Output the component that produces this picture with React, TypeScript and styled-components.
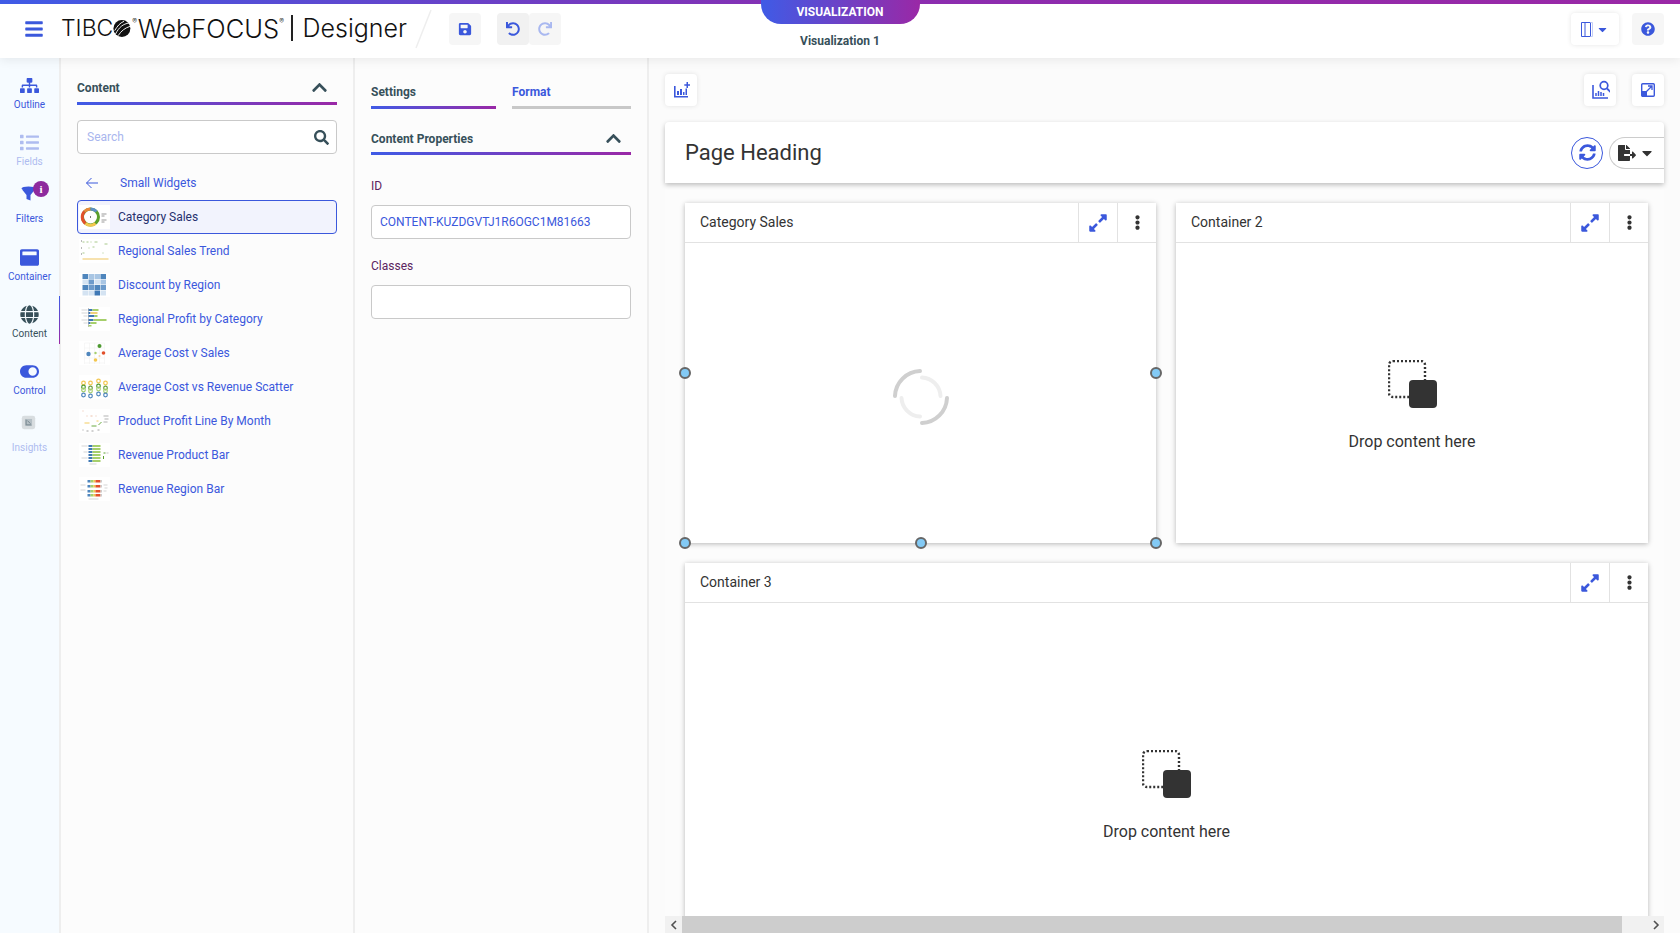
import React from 'react';
import styled, { createGlobalStyle } from 'styled-components';
import {
  FaBars,
  FaCaretDown,
  FaChevronUp,
  FaEllipsisV,
  FaExpandAlt,
  FaFileExport,
  FaGlobe,
  FaList,
  FaQuestionCircle,
  FaRedo,
  FaSave,
  FaSearch,
  FaSitemap,
  FaSyncAlt,
  FaToggleOn,
  FaUndo,
  FaWindowMaximize,
} from 'react-icons/fa';

const BLUE = '#3b58dc';
const SLATE = '#37505a';
const GRADIENT = 'linear-gradient(90deg, #3f5be6 0%, #9a28a6 100%)';

const GlobalStyle = createGlobalStyle`
  html, body {
    margin: 0;
    height: 100%;
    overflow: hidden;
    font-family: Roboto, "Liberation Sans", sans-serif;
    background: #fcfcfc;
  }
  * { box-sizing: border-box; }
`;

const Shell = styled.div`
  width: 1680px;
  height: 933px;
  display: flex;
  flex-direction: column;
  overflow: hidden;
`;

const TopBar = styled.header`
  position: relative;
  z-index: 3;
  height: 58px;
  flex: none;
  display: flex;
  align-items: center;
  padding: 0 16px 0 24px;
  background: #fff;
  box-shadow: 0 2px 10px rgba(0, 0, 0, 0.08);
  &::before {
    content: '';
    position: absolute;
    left: 0;
    right: 0;
    top: 0;
    height: 4px;
    background: linear-gradient(90deg, #3f5be6 0%, #8a2db0 50%, #9a28a6 100%);
  }
`;

const Burger = styled.span`
  display: flex;
  color: ${BLUE};
  font-size: 20px;
  width: 37px;
`;

const Logo = styled.div`
  display: flex;
  align-items: center;
  width: 346px;
  height: 30px;
  margin-top: -2px;
  font-family: Inter, sans-serif;
  font-weight: 300;
  color: #111;
  white-space: nowrap;
  svg {
    margin: 0 1px 0 0;
  }
  sup {
    font-size: 7px;
    line-height: 0;
    margin-top: -12px;
    margin-right: 1px;
  }
`;

const LogoWord = styled.span<{ $size: number }>`
  font-size: ${(p) => p.$size}px;
`;

const LogoBar = styled.span`
  width: 2px;
  height: 26px;
  margin: 0 10px 0 6px;
  background: #222;
`;

const Slash = styled.svg`
  flex: none;
  width: 18px;
  height: 40px;
  margin: 0 16px 0 8px;
`;

const ToolGroup = styled.div`
  display: flex;
  margin-right: 16px;
`;

const ToolButton = styled.button<{ $faded?: boolean; $shaded?: boolean }>`
  width: 32px;
  height: 32px;
  padding: 0;
  border: 0;
  border-radius: 4px;
  display: flex;
  align-items: center;
  justify-content: center;
  font-size: 14px;
  color: ${(p) => (p.$faded ? '#a9b8f0' : BLUE)};
  background: ${(p) => (p.$shaded ? '#f1f1f1' : '#f6f6f6')};
`;

const TabCentre = styled.div`
  position: absolute;
  left: 760px;
  top: 0;
  width: 160px;
  display: flex;
  flex-direction: column;
  align-items: center;
`;

const ModeTab = styled.div`
  width: 159px;
  height: 24px;
  border-radius: 0 0 20px 20px;
  background: ${GRADIENT};
  color: #fff;
  font-size: 12px;
  font-weight: 700;
  text-align: center;
  line-height: 25px;
`;

const DocTitle = styled.div`
  margin-top: 10px;
  font-size: 12px;
  font-weight: 700;
  color: ${SLATE};
`;

const TopRight = styled.div`
  margin-left: auto;
  display: flex;
  gap: 13px;
`;

const PanelToggle = styled.button`
  width: 48px;
  height: 32px;
  padding: 0;
  border: 0;
  border-radius: 4px;
  display: flex;
  align-items: center;
  justify-content: center;
  gap: 3px;
  color: ${BLUE};
  font-size: 13px;
  background: #fff;
  box-shadow: 0 0 5px rgba(0, 0, 0, 0.1);
`;

const Main = styled.div`
  flex: 1;
  min-height: 0;
  display: flex;
`;

const Rail = styled.nav`
  width: 61px;
  flex: none;
  padding-top: 18px;
  background: #f6fbff;
  border-right: 2px solid #eeeeee;
`;

const RailItem = styled.div<{ $tone: 'blue' | 'faded' | 'active' }>`
  position: relative;
  height: 57.3px;
  display: flex;
  flex-direction: column;
  align-items: center;
  font-size: 10px;
  color: ${(p) => (p.$tone === 'blue' ? BLUE : p.$tone === 'faded' ? '#aebcf0' : SLATE)};
  svg {
    height: 19px;
    width: 19px;
    margin-bottom: 4px;
    color: ${(p) => (p.$tone === 'blue' ? BLUE : p.$tone === 'faded' ? '#aebcf0' : SLATE)};
  }
  ${(p) =>
    p.$tone === 'active'
      ? `&::after {
    content: '';
    position: absolute;
    right: -1px;
    top: -9px;
    width: 1.5px;
    height: 48px;
    background: linear-gradient(180deg, #3f5be6, #9a28a6);
  }`
      : ''}
`;

const SmallIconSlot = styled.span`
  display: flex;
  height: 22px;
  align-items: flex-start;
  && svg {
    width: 15px;
    height: 15px;
    margin: -5px 0 0 -2px;
  }
`;

const Badge = styled.span`
  position: absolute;
  left: 33px;
  top: -10px;
  width: 16px;
  height: 16px;
  border-radius: 50%;
  background: #8e2a9e;
  color: #fff;
  font-size: 11px;
  font-weight: 700;
  line-height: 16px;
  text-align: center;
  font-family: 'Liberation Serif', serif;
`;

const Panel = styled.section<{ $width: number }>`
  width: ${(p) => p.$width}px;
  flex: none;
  padding: 0 16px;
  background: #fcfcfc;
  border-right: 2px solid #eeeeee;
`;

const SectionHead = styled.div`
  height: 22px;
  display: flex;
  align-items: flex-start;
  justify-content: space-between;
  padding: 1px 9px 0 0;
  font-size: 12px;
  font-weight: 700;
  color: ${SLATE};
  svg {
    font-size: 17px;
    margin-top: -2px;
  }
`;

const GradientRule = styled.div`
  height: 3px;
  background: ${GRADIENT};
`;

const ContentTop = styled.div`
  padding-top: 22px;
`;

const SearchBox = styled.div`
  height: 34px;
  margin-top: 15px;
  display: flex;
  align-items: center;
  justify-content: space-between;
  padding: 0 7px 0 9px;
  background: #fff;
  border: 1px solid #c9c9c9;
  border-radius: 4px;
  font-size: 12px;
  color: #a9b6ee;
  svg {
    font-size: 15px;
    color: ${SLATE};
  }
`;

const BackRow = styled.div`
  height: 46px;
  display: flex;
  align-items: center;
  padding: 11px 0 0 8px;
  font-size: 12px;
  color: ${BLUE};
  svg {
    width: 14px;
    height: 14px;
    margin-right: 21px;
  }
`;

const WidgetRow = styled.div<{ $selected?: boolean }>`
  height: 34px;
  display: flex;
  align-items: center;
  gap: 8px;
  padding-left: 1px;
  font-size: 12px;
  color: ${(p) => (p.$selected ? '#26306e' : BLUE)};
  background: ${(p) => (p.$selected ? '#f2f3fd' : 'transparent')};
  border: 1px solid ${(p) => (p.$selected ? BLUE : 'transparent')};
  border-radius: 4px;
  svg {
    flex: none;
    width: 31px;
    height: 24px;
    background: #fff;
  }
`;

const TabRow = styled.div`
  display: flex;
  gap: 16px;
  padding-top: 27px;
`;

const TabItem = styled.div<{ $active?: boolean }>`
  flex: ${(p) => (p.$active ? '0 0 125px' : '1')};
  height: 24px;
  font-size: 12px;
  font-weight: 700;
  color: ${(p) => (p.$active ? SLATE : BLUE)};
  border-bottom: 3px solid transparent;
  border-image: ${(p) => (p.$active ? GRADIENT : 'linear-gradient(#c8c8c8, #c8c8c8)')} 1;
`;

const PropsHead = styled(SectionHead)`
  margin-top: 22px;
  height: 21px;
  padding-top: 1px;
`;

const Field = styled.label`
  display: block;
  margin-top: 24px;
  font-size: 12px;
  line-height: 14px;
  color: #5b2460;
  & + & {
    margin-top: 20px;
  }
`;

const FieldBox = styled.div`
  height: 34px;
  margin-top: 12px;
  padding: 0 8px;
  display: flex;
  align-items: center;
  background: #fff;
  border: 1px solid #c9c9c9;
  border-radius: 4px;
  font-size: 12px;
  color: ${BLUE};
`;

const Canvas = styled.main`
  flex: 1;
  min-width: 0;
  display: flex;
  flex-direction: column;
  background: #fbfbfb;
`;

const CanvasTools = styled.div`
  height: 64px;
  flex: none;
  display: flex;
  align-items: center;
  padding: 0 16px;
  gap: 16px;
`;

const FloatButton = styled.button`
  width: 32px;
  height: 32px;
  padding: 0;
  border: 0;
  border-radius: 4px;
  display: flex;
  align-items: center;
  justify-content: center;
  background: #fff;
  box-shadow: 0 0 5px rgba(0, 0, 0, 0.1);
  &:nth-child(2) {
    margin-left: auto;
  }
`;

const Page = styled.div`
  flex: 1;
  min-height: 0;
  width: 999px;
  margin-left: 16px;
  display: flex;
  flex-direction: column;
`;

const PageHead = styled.div`
  position: relative;
  z-index: 1;
  height: 61px;
  flex: none;
  display: flex;
  align-items: center;
  padding-left: 20px;
  background: #fff;
  border-radius: 4px 4px 0 0;
  box-shadow: 0 2px 5px rgba(0, 0, 0, 0.25);
`;

const PageTitle = styled.h1`
  margin: 0;
  flex: 1;
  font-size: 22px;
  font-weight: 400;
  color: #333;
`;

const RefreshButton = styled.button`
  width: 32px;
  height: 32px;
  padding: 0;
  border: 1px solid ${BLUE};
  border-radius: 50%;
  display: flex;
  align-items: center;
  justify-content: center;
  font-size: 17px;
  color: ${BLUE};
  background: #fff;
`;

const ExportPill = styled.button`
  width: 55px;
  height: 32px;
  margin-left: 6px;
  padding: 0 0 0 8px;
  border: 1px solid #ccc;
  border-right: 0;
  border-radius: 16px 0 0 16px;
  display: flex;
  align-items: center;
  gap: 3px;
  font-size: 18px;
  color: #333;
  background: #fff;
  svg:last-child {
    font-size: 16px;
  }
`;

const CardArea = styled.div`
  flex: 1;
  min-height: 0;
  overflow: hidden;
  display: grid;
  grid-template-columns: 471px 472px;
  grid-template-rows: 340px 400px;
  column-gap: 20px;
  row-gap: 20px;
  padding: 20px 16px 0 20px;
  background: #fcfcfc;
`;

const Card = styled.article<{ $wide?: boolean }>`
  position: relative;
  display: flex;
  flex-direction: column;
  background: #fff;
  box-shadow: 0 1px 5px rgba(0, 0, 0, 0.28);
  ${(p) => (p.$wide ? 'grid-column: 1 / 3;' : '')}
`;

const CardHead = styled.div`
  height: 40px;
  flex: none;
  display: flex;
  align-items: center;
  padding-left: 15px;
  border-bottom: 1px solid #e2e2e2;
  font-size: 14px;
  color: #333;
`;

const CardTitle = styled.span`
  flex: 1;
  padding-bottom: 2px;
`;

const CardAction = styled.button<{ $dark?: boolean }>`
  width: 39px;
  height: 39px;
  padding: 0;
  border: 0;
  border-left: 1px solid #e2e2e2;
  display: flex;
  align-items: center;
  justify-content: center;
  background: #fff;
  font-size: ${(p) => (p.$dark ? '15px' : '20px')};
  color: ${(p) => (p.$dark ? '#333' : BLUE)};
`;

const CardBody = styled.div<{ $top: number }>`
  flex: 1;
  display: flex;
  flex-direction: column;
  align-items: center;
  padding-top: ${(p) => p.$top}px;
`;

const DropText = styled.div`
  margin-top: 24px;
  font-size: 16px;
  line-height: 19px;
  color: #333;
`;

const Handle = styled.span<{ $x: string; $y: string }>`
  position: absolute;
  left: ${(p) => p.$x};
  top: ${(p) => p.$y};
  width: 12px;
  height: 12px;
  margin: -6px 0 0 -6px;
  border-radius: 50%;
  background: #83caf5;
  border: 2px solid #666;
`;

const ScrollBar = styled.div`
  height: 17px;
  flex: none;
  display: flex;
  background: #f1f1f1;
`;

const ScrollArrow = styled.div`
  width: 17px;
  display: flex;
  align-items: center;
  justify-content: center;
  color: #505050;
  svg {
    width: 8px;
    height: 10px;
  }
`;

const ScrollThumb = styled.div`
  flex: 1;
  background: #cdcdcd;
`;

const ScrollRest = styled.div`
  width: 25px;
`;

const LogoBall = () => (
  <svg width="21" height="21" viewBox="0 0 21 21">
    <circle cx="10.5" cy="10.5" r="10" fill="#111" />
    <path d="M3 17 C7 9 12 5 19 4 M6 19 C10 13 14 10 20 8 M2 13 C5 8 8 4 13 2" stroke="#fff" strokeWidth="1.1" fill="none" />
  </svg>
);

const PanelIcon = () => (
  <svg width="12" height="15" viewBox="0 0 12 15" fill="none" stroke={BLUE} strokeWidth="1">
    <path d="M0.5 0.500h9v14h-9zM4 0.500v14" />
    <path d="M9.500 0.500h2v14h-2" stroke="#c5cff5" />
  </svg>
);

const FunnelIcon = () => (
  <svg viewBox="0 0 15 15" fill={BLUE}>
    <ellipse cx="7.500" cy="2.500" rx="7" ry="2" />
    <path d="M1 3.500h13L9.500 9v5.500l-4-1.500V9z" />
  </svg>
);

const InsightsIcon = () => (
  <svg viewBox="0 0 19 19">
    <rect x="1" y="1" width="17" height="17" rx="3" fill="#d8dde0" />
    <rect x="5" y="5" width="9" height="9" fill="#b5bfc5" />
    <path d="M6.5 6v6.5H13" stroke="#74858e" strokeWidth="1.2" fill="none" />
    <path d="M8 7l4 4" stroke="#74858e" strokeWidth="1.2" />
  </svg>
);

const ChartPlusIcon = () => (
  <svg width="18" height="18" viewBox="-1 0 18 18" fill={BLUE}>
    <path d="M1 5h1.6v10H15v1.6H1z" />
    <path d="M4 10h2v4H4zM7 8h2v6H7zM10 11h1.500v3H10zM12.500 7.500H14V14h-1.500z" />
    <path d="M13.500 1h1.500v2.200h2.200v1.500H15v2.200h-1.500V4.700h-2.200V3.200h2.200z" />
  </svg>
);

const ChartSearchIcon = () => (
  <svg width="20" height="20" viewBox="-2 0 20 20" fill="none" stroke={BLUE}>
    <path d="M1 5v13h15" strokeWidth="1.6" />
    <path d="M4 16v-3M6.5 16v-5M9 16v-4M11.5 16v-3" strokeWidth="1.5" />
    <circle cx="12" cy="5.5" r="3.8" strokeWidth="1.7" />
    <path d="M15 8.5l4 4" strokeWidth="1.8" />
  </svg>
);

const MaximizeIcon = () => (
  <svg width="14" height="14" viewBox="0 0 14 14">
    <rect x="0.7" y="0.7" width="12.6" height="12.6" rx="1" fill="none" stroke={BLUE} strokeWidth="1.4" />
    <rect x="1" y="8" width="5" height="5" fill={BLUE} />
    <path d="M5.5 8.5l5-5M7 3h4v4" stroke={BLUE} strokeWidth="1.3" fill="none" />
  </svg>
);

const BackArrow = () => (
  <svg viewBox="0 0 14 14" fill="none" stroke={BLUE} strokeWidth="1">
    <path d="M13 7H1.5M6.5 2L1.5 7l5 5" />
  </svg>
);

const Spinner = () => (
  <svg width="58" height="58" viewBox="0 0 58 58" fill="none" strokeLinecap="round">
    <path d="M3 28A26 26 0 0 1 28 3M55 30A26 26 0 0 1 30 55" stroke="#cfcfcf" strokeWidth="4" />
    <path d="M30 9.500A19.500 19.500 0 0 1 48.500 28M28 48.500A19.500 19.500 0 0 1 9.500 30" stroke="#eeeeee" strokeWidth="4" />
  </svg>
);

const DropIcon = () => (
  <svg width="49" height="48" viewBox="0 0 49 48">
    <rect x="1" y="1" width="36" height="36" rx="4" fill="none" stroke="#333" strokeWidth="2.4" strokeDasharray="2 2" />
    <rect x="21" y="20" width="28" height="28" rx="4" fill="#333" />
  </svg>
);

const CategoryThumb = () => (
  <svg viewBox="0 0 30 24" fill="none">
    <circle cx="11" cy="12" r="8" stroke="#5aa02c" strokeWidth="3" />
    <path d="M6 18.500A8 8 0 0 1 5 6.500" stroke="#e2502b" strokeWidth="3" />
    <path d="M5 6.500A8 8 0 0 1 11 4" stroke="#e8873a" strokeWidth="3" />
    <path d="M11 4A8 8 0 0 1 17 6.500" stroke="#5c8ec4" strokeWidth="3" />
    <path d="M6 18.500A8 8 0 0 0 16 18.500" stroke="#f3c74f" strokeWidth="3" />
    <path d="M22 9h5M22 11h3M22 15h5M22 17h3" stroke="#999" strokeWidth="1" />
    <path d="M11 11v2" stroke="#555" strokeWidth="0.8" />
  </svg>
);

const TrendThumb = () => (
  <svg viewBox="0 0 30 24" fill="none">
    <path d="M3 20h26" stroke="#f2cf7a" strokeWidth="1.2" />
    <path d="M3 3h2M7 3h2M11 3h1M15 3h3M25 5h3M9 9h1M13 8h2M3 14h2M23 14h1" stroke="#a9c98c" strokeWidth="1" />
    <path d="M2 1v2M2 8v2M2 14v2" stroke="#bbb" strokeWidth="1" />
  </svg>
);

const heat = [
  '#4f86bd #a9c6e4 #a9c6e4 #4f86bd',
  '#d4e3f2 #6d9bcb #d4e3f2 #a9c6e4',
  '#4f86bd #6d9bcb #4f86bd #6d9bcb',
  '#d4e3f2 #d4e3f2 #3f78b5 #d4e3f2',
];

const HeatThumb = () => (
  <svg viewBox="0 0 30 24">
    {heat.map((row, y) =>
      row.split(' ').map((fill, x) => (
        <rect key={`${x}-${y}`} x={3 + x * 6} y={1 + y * 5.5} width="5.500" height="5" fill={fill} />
      )),
    )}
  </svg>
);

const BarsThumb = () => (
  <svg viewBox="0 0 30 24">
    <path d="M9 1v19" stroke="#999" strokeWidth="0.6" />
    <rect x="9" y="2" width="4" height="2" fill="#3f78b5" />
    <rect x="13" y="2" width="6" height="2" fill="#a6cf6b" />
    <rect x="9" y="5" width="2" height="2" fill="#3f78b5" />
    <rect x="11" y="5" width="7" height="2" fill="#f0d27a" />
    <rect x="9" y="8" width="6" height="2" fill="#3f78b5" />
    <rect x="15" y="8" width="3" height="2" fill="#a6cf6b" />
    <rect x="9" y="12" width="5" height="2" fill="#3f78b5" />
    <rect x="14" y="12" width="13" height="2" fill="#a6cf6b" />
    <rect x="9" y="15" width="2" height="2" fill="#3f78b5" />
    <rect x="11" y="15" width="6" height="2" fill="#a6cf6b" />
    <rect x="9" y="18" width="3" height="1.500" fill="#a6cf6b" />
    <path d="M2 3h6M2 6h6M4 9h4M2 13h6M4 16h4" stroke="#bbb" strokeWidth="0.6" />
  </svg>
);

const ScatterThumb = () => (
  <svg viewBox="0 0 30 24">
    <path d="M5 2v21M10 2v21M15 2v21M20 2v21M25 2v21M5 2h20M5 7h20M5 12h20M5 17h20M5 22h20" stroke="#eee" strokeWidth="0.5" />
    <circle cx="20" cy="5" r="2" fill="#4d9a30" />
    <circle cx="9" cy="13" r="2.200" fill="#4f86bd" />
    <circle cx="24" cy="12" r="1.800" fill="#e2502b" />
    <circle cx="16" cy="12" r="1.200" fill="#a6cf6b" />
    <circle cx="16" cy="19" r="1.800" fill="#f3c74f" />
    <circle cx="20" cy="15" r="1.100" fill="#f5d9a8" />
  </svg>
);

const rings: [number, number, string][] = [
  [4, 8, '#f3c74f'], [11, 8, '#f3c74f'], [19, 6, '#f3c74f'], [26, 8, '#f3c74f'],
  [4, 12, '#4d9a30'], [11, 13, '#6a9f3b'], [19, 11, '#4d9a30'], [26, 13, '#6a9f3b'],
  [4, 15, '#a6cf6b'], [11, 16, '#a6cf6b'], [19, 14, '#a6cf6b'], [26, 16, '#a6cf6b'],
  [4, 20, '#4f86bd'], [11, 21, '#4f86bd'], [19, 19, '#4f86bd'], [26, 20, '#4f86bd'],
];

const RingsThumb = () => (
  <svg viewBox="0 0 30 24" fill="none" strokeWidth="1.2">
    {rings.map(([cx, cy, stroke]) => (
      <circle key={`${cx}-${cy}`} cx={cx} cy={cy} r="1.800" stroke={stroke} />
    ))}
  </svg>
);

const LineThumb = () => (
  <svg viewBox="0 0 30 24" fill="none" strokeWidth="0.9">
    <path d="M3 2h1M7 7h1M11 7h2M16 7h1" stroke="#eab9a0" />
    <path d="M5 14h5" stroke="#f3c74f" />
    <path d="M12 17h5M19 16l3-3" stroke="#5aa02c" />
    <path d="M24 7h5M25 10h4M24 13h4" stroke="#aaa" />
    <path d="M3 21h1M7 22h2M12 22h2M18 21h2" stroke="#999" />
    <path d="M17 12h2" stroke="#f3c74f" />
  </svg>
);

const ProductBarThumb = () => (
  <svg viewBox="0 0 30 24">
    {[2, 5, 8, 11, 14, 17].map((y) => (
      <g key={y}>
        <rect x="9" y={y} width="4" height="2" fill="#3f78b5" />
        <rect x="13" y={y} width="8" height="2" fill="#a6cf6b" />
      </g>
    ))}
    <path d="M2 3h6M4 9h4M2 15h6M10 21h7" stroke="#bbb" strokeWidth="0.6" />
    <path d="M24 10h2M24 13v3" stroke="#5aa02c" strokeWidth="1" />
    <path d="M27 10h2" stroke="#aaa" strokeWidth="0.7" />
  </svg>
);

const RegionBarThumb = () => (
  <svg viewBox="0 0 30 24">
    {[3, 8, 13, 17].map((y) => (
      <g key={y}>
        <rect x="8" y={y} width="3" height="2.500" fill="#4f86bd" />
        <rect x="11" y={y} width="3" height="2.500" fill="#a6cf6b" />
        <rect x="14" y={y} width="2" height="2.500" fill="#f3c74f" />
        <rect x="16" y={y} width="5" height="2.500" fill="#e2502b" />
        <rect x="21" y={y} width="1.500" height="2.500" fill="#ccc" />
      </g>
    ))}
    <path d="M1 8h5M1 13h5M9 22h10M24 8h4M25 11h3M24 14h3" stroke="#bbb" strokeWidth="0.6" />
  </svg>
);

const widgets: { name: string; thumb: React.ReactNode }[] = [
  { name: 'Category Sales', thumb: <CategoryThumb /> },
  { name: 'Regional Sales Trend', thumb: <TrendThumb /> },
  { name: 'Discount by Region', thumb: <HeatThumb /> },
  { name: 'Regional Profit by Category', thumb: <BarsThumb /> },
  { name: 'Average Cost v Sales', thumb: <ScatterThumb /> },
  { name: 'Average Cost vs Revenue Scatter', thumb: <RingsThumb /> },
  { name: 'Product Profit Line By Month', thumb: <LineThumb /> },
  { name: 'Revenue Product Bar', thumb: <ProductBarThumb /> },
  { name: 'Revenue Region Bar', thumb: <RegionBarThumb /> },
];

const DropZone: React.FC<{ top: number }> = ({ top }) => (
  <CardBody $top={top}>
    <DropIcon />
    <DropText>Drop content here</DropText>
  </CardBody>
);

const CardActions = () => (
  <>
    <CardAction>
      <FaExpandAlt />
    </CardAction>
    <CardAction $dark>
      <FaEllipsisV />
    </CardAction>
  </>
);

export default function App() {
  return (
    <Shell>
      <GlobalStyle />
      <TopBar>
        <Burger>
          <FaBars />
        </Burger>
        <Logo>
          <LogoWord $size={23}>TIBC</LogoWord>
          <LogoBall />
          <sup>®</sup>
          <LogoWord $size={25.5}>WebFOCUS</LogoWord>
          <sup>®</sup>
          <LogoBar />
          <LogoWord $size={25}>Designer</LogoWord>
        </Logo>
        <Slash viewBox="0 0 18 40">
          <line x1="1" y1="39" x2="16" y2="1" stroke="#eeeeee" strokeWidth="1.5" />
        </Slash>
        <ToolGroup>
          <ToolButton>
            <FaSave />
          </ToolButton>
        </ToolGroup>
        <ToolGroup>
          <ToolButton $shaded>
            <FaUndo />
          </ToolButton>
          <ToolButton $faded>
            <FaRedo />
          </ToolButton>
        </ToolGroup>
        <TabCentre>
          <ModeTab>VISUALIZATION</ModeTab>
          <DocTitle>Visualization 1</DocTitle>
        </TabCentre>
        <TopRight>
          <PanelToggle>
            <PanelIcon />
            <FaCaretDown />
          </PanelToggle>
          <ToolButton>
            <FaQuestionCircle />
          </ToolButton>
        </TopRight>
      </TopBar>

      <Main>
        <Rail>
          <RailItem $tone="blue">
            <FaSitemap />
            Outline
          </RailItem>
          <RailItem $tone="faded">
            <FaList />
            Fields
          </RailItem>
          <RailItem $tone="blue">
            <SmallIconSlot>
              <FunnelIcon />
            </SmallIconSlot>
            <Badge>i</Badge>
            Filters
          </RailItem>
          <RailItem $tone="blue">
            <FaWindowMaximize />
            Container
          </RailItem>
          <RailItem $tone="active">
            <FaGlobe />
            Content
          </RailItem>
          <RailItem $tone="blue">
            <FaToggleOn />
            Control
          </RailItem>
          <RailItem $tone="faded">
            <SmallIconSlot>
              <InsightsIcon />
            </SmallIconSlot>
            Insights
          </RailItem>
        </Rail>

        <Panel $width={294}>
          <ContentTop>
            <SectionHead>
              Content
              <FaChevronUp />
            </SectionHead>
            <GradientRule />
          </ContentTop>
          <SearchBox>
            Search
            <FaSearch />
          </SearchBox>
          <BackRow>
            <BackArrow />
            Small Widgets
          </BackRow>
          {widgets.map((w, i) => (
            <WidgetRow key={w.name} $selected={i === 0}>
              {w.thumb}
              {w.name}
            </WidgetRow>
          ))}
        </Panel>

        <Panel $width={294}>
          <TabRow>
            <TabItem $active>Settings</TabItem>
            <TabItem>Format</TabItem>
          </TabRow>
          <PropsHead>
            Content Properties
            <FaChevronUp />
          </PropsHead>
          <GradientRule />
          <Field>
            ID
            <FieldBox>CONTENT-KUZDGVTJ1R6OGC1M81663</FieldBox>
          </Field>
          <Field>
            Classes
            <FieldBox />
          </Field>
        </Panel>

        <Canvas>
          <CanvasTools>
            <FloatButton>
              <ChartPlusIcon />
            </FloatButton>
            <FloatButton>
              <ChartSearchIcon />
            </FloatButton>
            <FloatButton>
              <MaximizeIcon />
            </FloatButton>
          </CanvasTools>
          <Page>
            <PageHead>
              <PageTitle>Page Heading</PageTitle>
              <RefreshButton>
                <FaSyncAlt />
              </RefreshButton>
              <ExportPill>
                <FaFileExport />
                <FaCaretDown />
              </ExportPill>
            </PageHead>
            <CardArea>
              <Card>
                <CardHead>
                  <CardTitle>Category Sales</CardTitle>
                  <CardActions />
                </CardHead>
                <CardBody $top={125}>
                  <Spinner />
                </CardBody>
                <Handle $x="0" $y="170px" />
                <Handle $x="100%" $y="170px" />
                <Handle $x="0" $y="100%" />
                <Handle $x="50%" $y="100%" />
                <Handle $x="100%" $y="100%" />
              </Card>
              <Card>
                <CardHead>
                  <CardTitle>Container 2</CardTitle>
                  <CardActions />
                </CardHead>
                <DropZone top={117} />
              </Card>
              <Card $wide>
                <CardHead>
                  <CardTitle>Container 3</CardTitle>
                  <CardActions />
                </CardHead>
                <DropZone top={147} />
              </Card>
            </CardArea>
            <ScrollBar>
              <ScrollArrow>
                <svg viewBox="0 0 8 10" fill="none" stroke="currentColor" strokeWidth="1.6">
                  <path d="M6 1L2 5l4 4" />
                </svg>
              </ScrollArrow>
              <ScrollThumb />
              <ScrollRest />
              <ScrollArrow>
                <svg viewBox="0 0 8 10" fill="none" stroke="currentColor" strokeWidth="1.6">
                  <path d="M2 1l4 4-4 4" />
                </svg>
              </ScrollArrow>
            </ScrollBar>
          </Page>
        </Canvas>
      </Main>
    </Shell>
  );
}
